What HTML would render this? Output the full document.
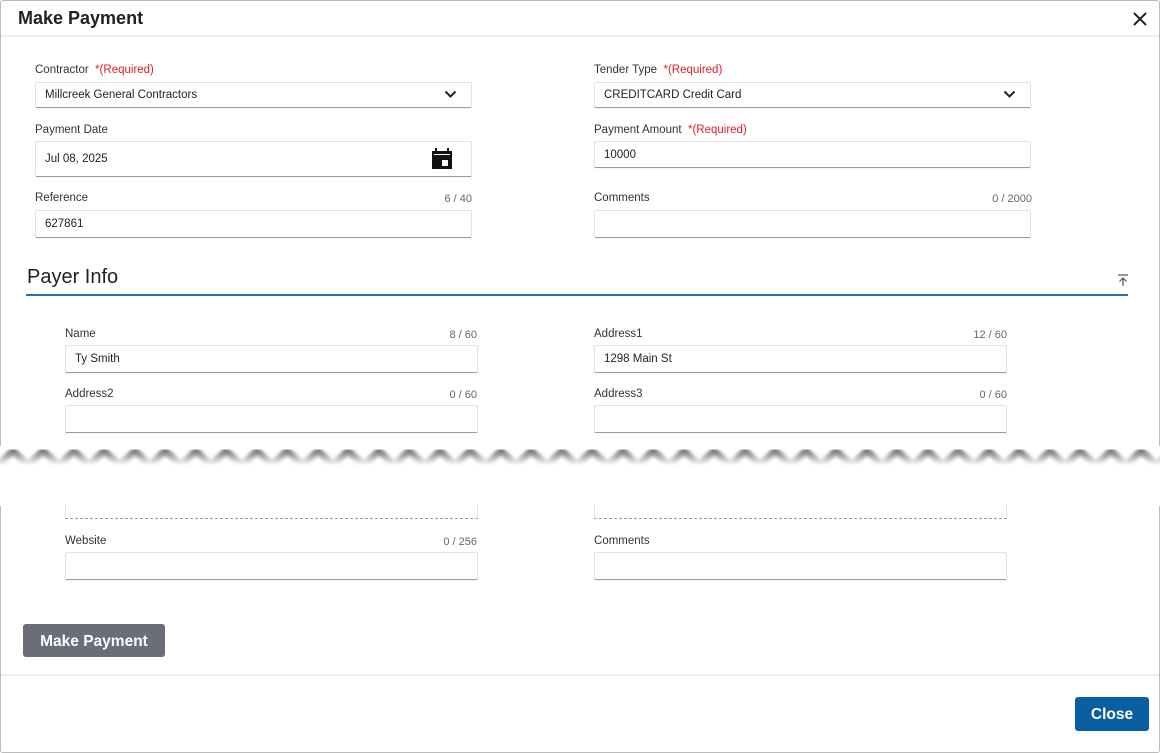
<!DOCTYPE html>
<html><head><meta charset="utf-8"><style>
*{box-sizing:border-box;margin:0;padding:0}
body{width:1160px;height:753px;background:#fff;font-family:"Liberation Sans",sans-serif;color:#333;position:relative;overflow:hidden}
.abs{position:absolute}
.lbl{position:absolute;font-size:11.5px;color:#333}
.cnt{position:absolute;font-size:11px;color:#666;text-align:right}
.req{color:#e0202a}
.inp{position:absolute;background:#fff;border:1px solid #e2e2e2;border-bottom:1.5px solid #9a9a9a;border-radius:2px;font-size:11.5px;color:#222;padding-left:9px;display:flex;align-items:center;box-shadow:0 1px 1px rgba(0,0,0,.04)}
</style></head><body>
<div class="abs" style="left:0;top:0;width:1160px;height:753px;border:1px solid #bbb;border-radius:3px"></div>
<div class="abs" style="left:18px;top:8px;font-size:18px;font-weight:bold;color:#222">Make Payment</div>
<svg class="abs" style="left:1132px;top:11px" width="16" height="16" viewBox="0 0 16 16"><path d="M2 2L14 14M14 2L2 14" stroke="#222" stroke-width="2"/></svg>
<div class="abs" style="left:1px;top:35px;width:1158px;height:2px;background:#eeeef2"></div>

<div class="lbl" style="left:35px;top:64px">Contractor <span class="req">&nbsp;*(Required)</span></div>
<div class="inp" style="left:35px;top:82px;width:437px;height:26px">Millcreek General Contractors</div>
<svg class="abs" style="left:444px;top:90px" width="13" height="9" viewBox="0 0 13 9"><path d="M1.5 1.5L6.5 6.5L11.5 1.5" stroke="#222" stroke-width="2" fill="none"/></svg>
<div class="lbl" style="left:35px;top:124px">Payment Date</div>
<div class="inp" style="left:35px;top:141px;width:437px;height:36px">Jul 08, 2025</div>
<svg class="abs" style="left:431px;top:148px" width="22" height="22" viewBox="0 0 22 22"><rect x="1" y="3" width="20" height="18" fill="#111"/><rect x="4" y="0" width="2" height="4" fill="#111"/><rect x="16" y="0" width="2" height="4" fill="#111"/><rect x="3" y="6" width="16" height="1" fill="#fff"/><rect x="11" y="12" width="6" height="6" fill="#fff"/></svg>
<div class="lbl" style="left:35px;top:192px">Reference</div><div class="cnt" style="left:400px;width:72px;top:193px">6 / 40</div>
<div class="inp" style="left:35px;top:210px;width:437px;height:28px">627861</div>

<div class="lbl" style="left:594px;top:64px">Tender Type <span class="req">&nbsp;*(Required)</span></div>
<div class="inp" style="left:594px;top:82px;width:437px;height:26px">CREDITCARD Credit Card</div>
<svg class="abs" style="left:1003px;top:90px" width="13" height="9" viewBox="0 0 13 9"><path d="M1.5 1.5L6.5 6.5L11.5 1.5" stroke="#222" stroke-width="2" fill="none"/></svg>
<div class="lbl" style="left:594px;top:124px">Payment Amount <span class="req">&nbsp;*(Required)</span></div>
<div class="inp" style="left:594px;top:141px;width:437px;height:27px">10000</div>
<div class="lbl" style="left:594px;top:192px">Comments</div><div class="cnt" style="left:950px;width:82px;top:193px">0 / 2000</div>
<div class="inp" style="left:594px;top:210px;width:437px;height:28px"></div>

<div class="abs" style="left:27px;top:266px;font-size:20px;color:#222">Payer Info</div>
<svg class="abs" style="left:1117px;top:274px" width="12" height="13" viewBox="0 0 12 13"><path d="M1 1H11M6 12V4M2.5 7.5L6 4L9.5 7.5" stroke="#555" stroke-width="1.2" fill="none"/></svg>
<div class="abs" style="left:26px;top:294px;width:1102px;height:2px;background:#2b6ea6"></div>

<div class="lbl" style="left:65px;top:328px">Name</div><div class="cnt" style="left:400px;width:77px;top:329px">8 / 60</div>
<div class="inp" style="left:65px;top:345px;width:413px;height:28px">Ty Smith</div>
<div class="lbl" style="left:594px;top:328px">Address1</div><div class="cnt" style="left:930px;width:77px;top:329px">12 / 60</div>
<div class="inp" style="left:594px;top:345px;width:413px;height:28px">1298 Main St</div>
<div class="lbl" style="left:65px;top:388px">Address2</div><div class="cnt" style="left:400px;width:77px;top:389px">0 / 60</div>
<div class="inp" style="left:65px;top:405px;width:413px;height:28px"></div>
<div class="lbl" style="left:594px;top:388px">Address3</div><div class="cnt" style="left:930px;width:77px;top:389px">0 / 60</div>
<div class="inp" style="left:594px;top:405px;width:413px;height:28px"></div>

<div class="abs" style="left:0;top:446px;width:1160px;height:60px;background:#fff"></div>
<svg class="abs" style="left:0;top:438px" width="1160" height="36"><defs><filter id="b"><feGaussianBlur stdDeviation="1.5"/></filter>
<linearGradient id="g" x1="0" y1="0" x2="0" y2="1"><stop offset="0" stop-color="#777"/><stop offset="1" stop-color="#fff"/></linearGradient></defs>
<path d="M-2 24 L13 10 L28 24 L43 10 L59 24 L74 10 L89 24 L104 10 L120 24 L135 10 L150 24 L165 10 L181 24 L196 10 L211 24 L226 10 L242 24 L257 10 L272 24 L287 10 L303 24 L318 10 L333 24 L348 10 L364 24 L379 10 L394 24 L409 10 L425 24 L440 10 L455 24 L470 10 L486 24 L501 10 L516 24 L531 10 L547 24 L562 10 L577 24 L592 10 L608 24 L623 10 L638 24 L653 10 L669 24 L684 10 L699 24 L714 10 L730 24 L745 10 L760 24 L775 10 L791 24 L806 10 L821 24 L836 10 L852 24 L867 10 L882 24 L897 10 L913 24 L928 10 L943 24 L958 10 L974 24 L989 10 L1004 24 L1019 10 L1035 24 L1050 10 L1065 24 L1080 10 L1096 24 L1111 10 L1126 24 L1141 10 L1157 24 L1172 10" stroke="url(#g)" stroke-width="7" fill="none" filter="url(#b)" transform="translate(0,3)"/>
</svg>

<div class="abs" style="left:65px;top:505px;width:413px;height:14px;border-left:1px solid #e2e2e2;border-right:1px solid #e2e2e2;border-bottom:1.5px dashed #9a9a9a"></div>
<div class="abs" style="left:594px;top:505px;width:413px;height:14px;border-left:1px solid #e2e2e2;border-right:1px solid #e2e2e2;border-bottom:1.5px dashed #9a9a9a"></div>

<div class="lbl" style="left:65px;top:535px">Website</div><div class="cnt" style="left:400px;width:77px;top:536px">0 / 256</div>
<div class="inp" style="left:65px;top:552px;width:413px;height:28px"></div>
<div class="lbl" style="left:594px;top:535px">Comments</div>
<div class="inp" style="left:594px;top:552px;width:413px;height:28px"></div>

<div class="abs" style="left:23px;top:624px;width:142px;height:33px;background:#6b6e77;border-radius:3px;color:#fff;font-size:15.5px;font-weight:bold;display:flex;align-items:center;justify-content:center;padding-top:2px">Make Payment</div>
<div class="abs" style="left:1px;top:674px;width:1158px;height:2px;background:#eeeef2"></div>
<div class="abs" style="left:1075px;top:697px;width:74px;height:34px;background:#0a5fa3;border-radius:3px;color:#fff;font-size:15.5px;font-weight:bold;display:flex;align-items:center;justify-content:center;padding-top:2px">Close</div>
</body></html>
